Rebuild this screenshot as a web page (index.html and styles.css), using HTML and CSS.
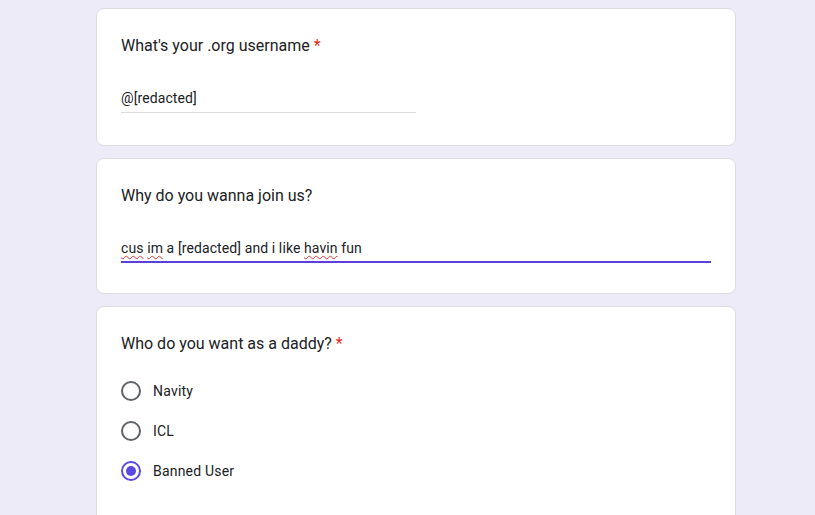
FILE: index.html
```html
<!DOCTYPE html>
<html lang="en">
<head>
<meta charset="utf-8">
<title>Form</title>
<link rel="stylesheet" href="styles.css">
</head>
<body>
<main class="form">
  <section class="card">
    <div class="title">What's your .org username <span class="req">*</span></div>
    <div class="input short">@[redacted]</div>
  </section>
  <section class="card compact">
    <div class="title">Why do you wanna join us?</div>
    <div class="input long focused"><span class="spell">cus</span> <span class="spell">im</span> a [redacted] and i like <span class="spell">havin</span> fun</div>
  </section>
  <section class="card">
    <div class="title">Who do you want as a daddy? <span class="req">*</span></div>
    <div class="options">
      <label class="option"><span class="radio"></span>Navity</label>
      <label class="option"><span class="radio"></span>ICL</label>
      <label class="option"><span class="radio checked"></span>Banned User</label>
    </div>
  </section>
</main>
</body>
</html>
```
FILE: styles.css
```css
html, body {
  margin: 0;
  padding: 0;
}
body {
  background: #eeebf9;
  font-family: Roboto, "Liberation Sans", sans-serif;
  color: #202124;
  height: 515px;
  overflow: hidden;
}
.form {
  width: 640px;
  margin: 8px 0 0 96px;
  display: flex;
  flex-direction: column;
  gap: 12px;
}
.card {
  background: #fff;
  border: 1px solid #dadce0;
  border-radius: 8px;
  padding: 25px 24px 32px;
}
.card.compact {
  padding-bottom: 30px;
}
.title {
  font-size: 16px;
  line-height: 24px;
}
.req {
  color: #d93025;
}
.input {
  margin-top: 23px;
  height: 32px;
  font-size: 14px;
  line-height: 30px;
  letter-spacing: 0.1px;
  border-bottom: 1px solid #dadce0;
  box-sizing: border-box;
  padding-top: 2px;
}
.input.short {
  width: 295px;
}
.input.long {
  width: 100%;
}
.input.focused {
  border-bottom: 2px solid #5b3fd9;
}
.spell {
  text-decoration: underline wavy #e53935;
  text-decoration-thickness: 1px;
  text-underline-offset: 2px;
}
.options {
  margin-top: 15px;
  display: flex;
  flex-direction: column;
}
.option {
  height: 40px;
  display: flex;
  align-items: center;
  gap: 12px;
  font-size: 14px;
  letter-spacing: 0.2px;
}
.radio {
  width: 20px;
  height: 20px;
  box-sizing: border-box;
  border: 2px solid #5f6368;
  border-radius: 50%;
  display: flex;
  align-items: center;
  justify-content: center;
}
.radio.checked {
  border-color: #5a48e2;
}
.radio.checked::after {
  content: "";
  width: 10px;
  height: 10px;
  border-radius: 50%;
  background: #5a48e2;
}
```
